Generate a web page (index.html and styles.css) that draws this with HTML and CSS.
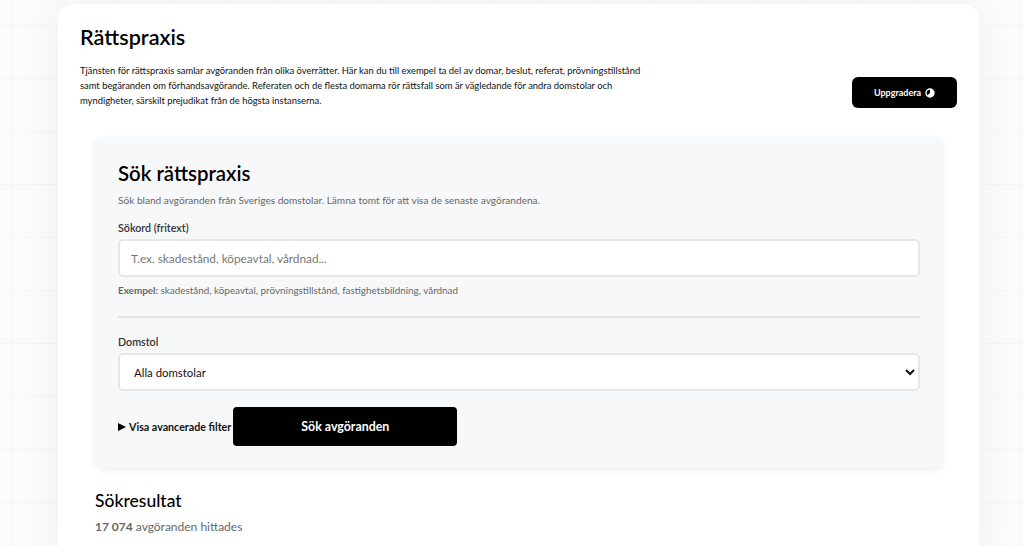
FILE: index.html
```html
<!DOCTYPE html>
<html lang="sv">

<head>
    <meta charset="UTF-8">
    <meta name="viewport" content="width=device-width, initial-scale=1.0">
    <title>Rättspraxis</title>
    <link rel="stylesheet" href="styles.css">
</head>

<body>
    <main class="page">
        <header class="intro">
            <div class="intro-text">
                <h1>Rättspraxis</h1>
                <p>Tjänsten för rättspraxis samlar avgöranden från olika överrätter. Här kan du till exempel ta del av domar, beslut, referat, prövningstillstånd samt begäranden om förhandsavgörande. Referaten och de flesta domarna rör rättsfall som är vägledande för andra domstolar och myndigheter, särskilt prejudikat från de högsta instanserna.</p>
            </div>
            <a class="upgrade" href="#">
                Uppgradera
                <svg width="10" height="10" viewBox="0 0 10 10">
                    <circle cx="5" cy="5" r="4" fill="none" stroke="#fff" stroke-width="1.4"/>
                    <path d="M5 1a4 4 0 1 1-3 6.6L5 5z" fill="#fff"/>
                </svg>
            </a>
        </header>

        <form class="search-card">
            <h2>Sök rättspraxis</h2>
            <p class="lead">Sök bland avgöranden från Sveriges domstolar. Lämna tomt för att visa de senaste avgörandena.</p>

            <label class="field-label" for="query">Sökord (fritext)</label>
            <input id="query" class="text-input" type="text" placeholder="T.ex. skadestånd, köpeavtal, vårdnad...">
            <p class="hint"><strong>Exempel:</strong> skadestånd, köpeavtal, prövningstillstånd, fastighetsbildning, vårdnad</p>

            <hr class="divider">

            <label class="field-label" for="court">Domstol</label>
            <select id="court" class="select-input">
                <option>Alla domstolar</option>
                <option>Högsta domstolen</option>
            </select>

            <div class="actions">
                <details class="advanced">
                    <summary>Visa avancerade filter</summary>
                </details>
                <button class="search-btn" type="button">Sök avgöranden</button>
            </div>
        </form>

        <section class="results">
            <h3>Sökresultat</h3>
            <p><strong>17 074</strong> avgöranden hittades</p>
        </section>
    </main>
</body>

</html>
```

FILE: styles.css
```css
* {
    box-sizing: border-box;
    margin: 0;
}

html,
body {
    height: 546px;
    overflow: hidden;
}

body {
    background-color: #fbfbfc;
    background-image:
        linear-gradient(#f5f5f6 1px, transparent 1px),
        linear-gradient(90deg, #f5f5f6 1px, transparent 1px);
    background-size: 53px 53px;
    background-position: 12px 25px;
    font-family: 'Lato', sans-serif;
    color: #000;
}

.page {
    width: 921px;
    height: 560px;
    margin: 4px 0 0 58px;
    padding: 20px 22px 0;
    background-color: #fff;
    border-radius: 16px;
    box-shadow: 0 0 40px rgba(0, 0, 0, 0.05);
}

.intro {
    display: flex;
    justify-content: space-between;
    align-items: flex-end;
}

.intro-text {
    width: 570px;
}

h1 {
    font-size: 21.6px;
    font-weight: 600;
    line-height: 26px;
    margin-bottom: 13px;
}

.intro-text p {
    font-size: 9.4px;
    line-height: 15px;
    color: #111;
}

.upgrade {
    display: flex;
    align-items: center;
    justify-content: center;
    gap: 4px;
    width: 105px;
    height: 31px;
    background-color: #000;
    color: #fff;
    font-size: 9px;
    font-weight: 700;
    text-decoration: none;
    border-radius: 6px;
}

.search-card {
    width: 848px;
    height: 331px;
    margin: 29px 0 0 15px;
    padding: 23px 23px 0;
    background-color: #f7f8fa;
    border-radius: 8px;
    box-shadow: 0 2px 6px rgba(0, 0, 0, 0.07);
}

h2 {
    font-size: 20.4px;
    font-weight: 600;
    line-height: 26px;
    margin-bottom: 7px;
}

.lead {
    font-size: 10.1px;
    line-height: 14px;
    color: #666;
    margin-bottom: 14px;
}

.field-label {
    display: block;
    font-size: 10.7px;
    font-weight: 600;
    line-height: 14px;
    color: #333;
    margin-bottom: 4px;
}

.text-input,
.select-input {
    display: block;
    width: 100%;
    height: 38px;
    background-color: #fff;
    border: 2px solid #e4e6e9;
    border-radius: 5px;
    font-family: 'Lato', sans-serif;
}

.text-input {
    padding: 0 11px;
    font-size: 11.8px;
}

.text-input::placeholder {
    color: #777;
}

.select-input {
    padding: 0 10px;
    font-size: 11.4px;
    color: #111;
}

.hint {
    font-size: 9.9px;
    line-height: 14px;
    color: #666;
    margin-top: 6px;
}

.divider {
    border: 0;
    height: 2px;
    background-color: #e2e4e7;
    margin: 19px 0 17px;
}

.actions {
    display: flex;
    align-items: center;
    gap: 2px;
    margin-top: 16px;
}

.advanced summary {
    display: flex;
    align-items: center;
    gap: 3px;
    font-size: 10.7px;
    font-weight: 700;
    color: #111;
    list-style: none;
}

.advanced summary::before {
    content: "";
    border-left: 8px solid #000;
    border-top: 4.5px solid transparent;
    border-bottom: 4.5px solid transparent;
}

.search-btn {
    width: 224px;
    height: 39px;
    background-color: #000;
    color: #fff;
    border: 0;
    border-radius: 4px;
    font-family: 'Lato', sans-serif;
    font-size: 12.4px;
    font-weight: 700;
}

.results {
    margin: 23px 0 0 15px;
}

h3 {
    font-size: 17.5px;
    font-weight: 500;
    line-height: 20px;
    margin-bottom: 8px;
}

.results p {
    font-size: 12px;
    line-height: 16px;
    color: #666;
}
```
